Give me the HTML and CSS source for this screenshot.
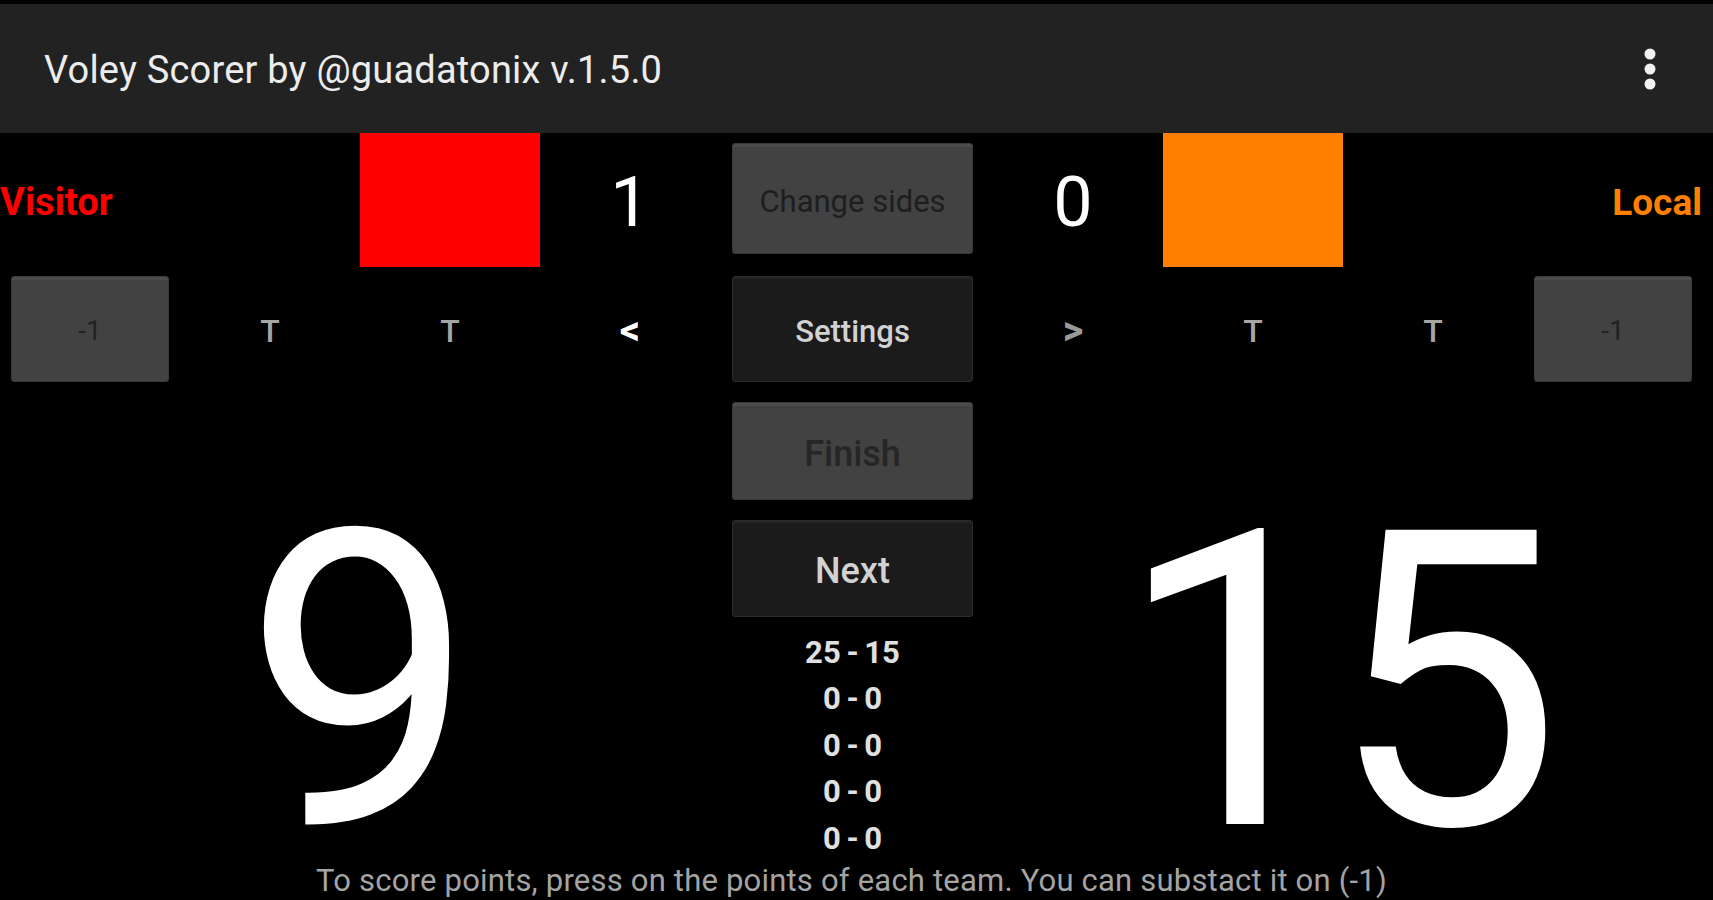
FILE: index.html
```html
<!DOCTYPE html>
<html lang="en">
<head>
<meta charset="utf-8">
<title>Voley Scorer</title>
<link rel="stylesheet" href="styles.css">
</head>
<body>
<div class="screen">
  <header class="appbar">
    <h1 class="title">Voley Scorer by @guadatonix v.1.5.0</h1>
    <button class="menu" aria-label="More options">
      <svg width="14" height="44" viewBox="0 0 14 44">
        <circle cx="7" cy="7" r="5.5" fill="#f2f2f2"/>
        <circle cx="7" cy="22" r="5.5" fill="#f2f2f2"/>
        <circle cx="7" cy="37" r="5.5" fill="#f2f2f2"/>
      </svg>
    </button>
  </header>

  <main class="board">
    <!-- Row 1 left -->
    <div class="team-row left">
      <div class="team-name visitor">Visitor</div>
      <div class="cell"></div>
      <div class="swatch red"></div>
      <div class="cell sets">1</div>
    </div>

    <div class="center-top">
      <button class="btn btn-muted change">Change sides</button>
    </div>

    <!-- Row 1 right -->
    <div class="team-row right">
      <div class="cell sets">0</div>
      <div class="swatch orange"></div>
      <div class="team-name local">Local</div>
    </div>

    <!-- Row 2 left -->
    <div class="ctrl-row">
      <div class="cell"><button class="btn btn-muted minus">-1</button></div>
      <div class="cell timeout">T</div>
      <div class="cell timeout">T</div>
      <div class="cell serve active">&lt;</div>
    </div>

    <div class="center-mid">
      <button class="btn btn-dark settings">Settings</button>
    </div>

    <!-- Row 2 right -->
    <div class="ctrl-row">
      <div class="cell serve">&gt;</div>
      <div class="cell timeout">T</div>
      <div class="cell timeout">T</div>
      <div class="cell"><button class="btn btn-muted minus">-1</button></div>
    </div>

    <!-- Row 3 -->
    <div class="big big-left">9</div>

    <div class="center-bottom">
      <button class="btn btn-muted finish">Finish</button>
      <button class="btn btn-dark next">Next</button>
      <ul class="sets-list">
        <li>25 - 15</li>
        <li>0 - 0</li>
        <li>0 - 0</li>
        <li>0 - 0</li>
        <li>0 - 0</li>
      </ul>
    </div>

    <div class="big big-right">15</div>
  </main>

  <footer class="hint">To score points, press on the points of each team. You can substact it on (-1)</footer>
</div>
</body>
</html>
```

FILE: styles.css
```css
* {
  box-sizing: border-box;
}

html, body {
  margin: 0;
  padding: 0;
  background: #000;
}

body {
  font-family: Roboto, "Liberation Sans", Arial, sans-serif;
  color: #fff;
  width: 1713px;
  height: 900px;
  overflow: hidden;
}

.screen {
  padding-top: 4px;
  background: #000;
}

.appbar {
  height: 129px;
  background: #222222;
  display: flex;
  align-items: center;
  justify-content: space-between;
  padding: 3px 56px 0 44px;
}

.title {
  margin: 0;
  font-size: 38px;
  font-weight: 400;
  color: #ececec;
  letter-spacing: 0.2px;
}

.menu {
  background: none;
  border: 0;
  padding: 0;
  margin: 0;
  display: flex;
  margin-top: -3px;
}

.board {
  display: grid;
  grid-template-columns: 720px 1fr 720px;
  grid-template-rows: 134px 126px 469px;
  padding-right: 10px;
}

.team-row,
.ctrl-row {
  display: grid;
  grid-template-columns: repeat(4, 180px);
}

.team-row {
  align-items: stretch;
}

.ctrl-row {
  align-items: start;
}

.cell {
  display: flex;
  align-items: center;
  justify-content: center;
}

.team-name {
  display: flex;
  align-items: center;
  font-size: 38px;
  font-weight: 700;
  padding-top: 4px;
}

.visitor {
  color: #ff0000;
  letter-spacing: 0.1px;
}

.local {
  color: #ff8000;
  grid-column: 3 / 5;
  justify-content: flex-end;
  padding-right: 1px;
  font-size: 37px;
}

.swatch.red {
  background: #ff0000;
}

.swatch.orange {
  background: #ff8000;
}

.sets {
  font-size: 70px;
  font-weight: 400;
  color: #fff;
  padding-top: 3px;
}

.btn {
  font-family: Roboto, "Liberation Sans", Arial, sans-serif;
  border-radius: 3px;
  display: flex;
  align-items: center;
  justify-content: center;
  padding: 5px 0 0;
  cursor: pointer;
}

.btn-muted {
  background: #424242;
  border: 1px solid #3a3a3a;
  box-shadow: inset 0 3px 0 #4c4c4c;
  color: #1e1e1e;
}

.btn-dark {
  background: #1b1b1b;
  border: 1px solid #2c2c2c;
  box-shadow: inset 0 2px 0 #242424;
  color: #d2d2d2;
}

.center-top,
.center-mid,
.center-bottom {
  padding: 0 10px 0 12px;
}

.change {
  width: 100%;
  height: 111px;
  margin-top: 10px;
  font-size: 31px;
  font-weight: 400;
}

.settings {
  width: 100%;
  height: 106px;
  margin-top: 9px;
  font-size: 31px;
  font-weight: 500;
}

.minus {
  width: 158px;
  height: 106px;
  font-size: 28px;
  font-weight: 400;
  color: #222;
  padding-top: 2px;
}

.ctrl-row .cell {
  height: 106px;
  margin-top: 9px;
}

.timeout {
  font-size: 32px;
  font-weight: 500;
  color: #a6a6a6;
  padding-top: 3px;
}

.serve {
  font-size: 40px;
  font-weight: 700;
  color: #9a9a9a;
  padding-top: 3px;
}

.serve.active {
  color: #fff;
}

.center-bottom {
  display: flex;
  flex-direction: column;
  align-items: stretch;
}

.finish {
  height: 98px;
  margin-top: 9px;
  font-size: 36px;
  font-weight: 500;
  color: #262626;
}

.next {
  height: 97px;
  margin-top: 20px;
  font-size: 36px;
  font-weight: 500;
}

.sets-list {
  list-style: none;
  margin: 13px 0 0;
  padding: 0;
  text-align: center;
  font-size: 31px;
  font-weight: 700;
  color: #e0e0e0;
}

.sets-list li {
  height: 46.4px;
  line-height: 46.4px;
  word-spacing: -2px;
}

.big {
  font-size: 414px;
  line-height: 300px;
  padding-top: 140px;
  text-align: center;
  color: #fff;
  font-weight: 400;
}

.big-right {
  letter-spacing: -20px;
  padding-right: 28px;
}

.hint {
  width: 1703px;
  text-align: center;
  font-size: 31px;
  line-height: 32px;
  padding-top: 3px;
  color: #a4a4a4;
  letter-spacing: 0.2px;
}
```
